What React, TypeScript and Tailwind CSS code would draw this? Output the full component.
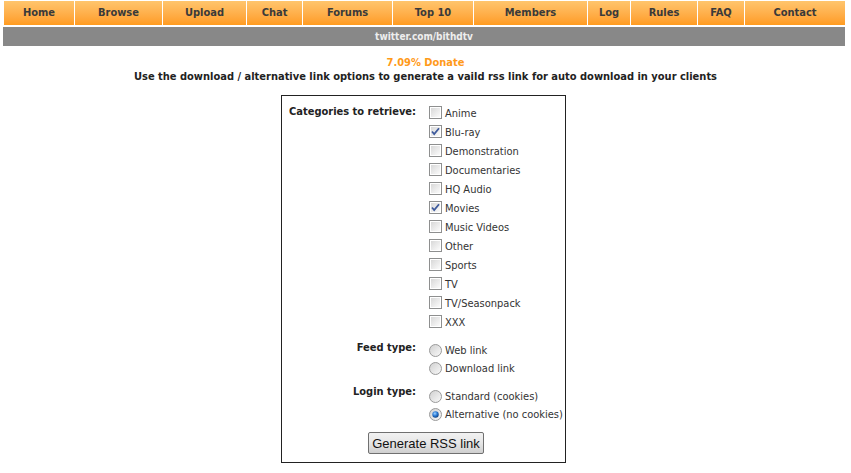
import React from "react";

const nav = [
  { label: "Home", w: "w-[70px]" },
  { label: "Browse", w: "w-[87px]" },
  { label: "Upload", w: "w-[83px]" },
  { label: "Chat", w: "w-[55px]" },
  { label: "Forums", w: "w-[89px]" },
  { label: "Top 10", w: "w-[80px]" },
  { label: "Members", w: "w-[113px]" },
  { label: "Log", w: "w-[42px]" },
  { label: "Rules", w: "w-[66px]" },
  { label: "FAQ", w: "w-[46px]" },
  { label: "Contact", w: "w-[100px]" },
];

const categories = [
  { name: "Anime", on: false },
  { name: "Blu-ray", on: true },
  { name: "Demonstration", on: false },
  { name: "Documentaries", on: false },
  { name: "HQ Audio", on: false },
  { name: "Movies", on: true },
  { name: "Music Videos", on: false },
  { name: "Other", on: false },
  { name: "Sports", on: false },
  { name: "TV", on: false },
  { name: "TV/Seasonpack", on: false },
  { name: "XXX", on: false },
];

const Checkbox = ({ on }: { on: boolean }) => (
  <svg width="13" height="13" viewBox="0 0 13 13" className="shrink-0">
    <defs>
      <linearGradient id="cbg" x1="0" y1="0" x2="1" y2="1">
        <stop offset="0" stopColor="#d8d8d8" />
        <stop offset="1" stopColor="#fbfbfb" />
      </linearGradient>
    </defs>
    <rect x="0.5" y="0.5" width="12" height="12" fill="#fff" stroke="#8e8f8f" />
    <rect x="2" y="2" width="9" height="9" fill="url(#cbg)" />
    {on && (
      <path d="M3 6.5 L5.2 9 L10 3.2" fill="none" stroke="#3e5a9c" strokeWidth="1.8" />
    )}
  </svg>
);

const Radio = ({ on }: { on: boolean }) => (
  <svg width="13" height="13" viewBox="0 0 13 13" className="shrink-0">
    <defs>
      <linearGradient id="rbg" x1="0" y1="0" x2="1" y2="1">
        <stop offset="0" stopColor="#cfcfcf" />
        <stop offset="1" stopColor="#fafafa" />
      </linearGradient>
      <radialGradient id="rdot" cx="0.4" cy="0.35" r="0.7">
        <stop offset="0" stopColor="#9fd3ff" />
        <stop offset="0.5" stopColor="#2b7bd6" />
        <stop offset="1" stopColor="#0b3a78" />
      </radialGradient>
    </defs>
    <circle cx="6.5" cy="6.5" r="6" fill="url(#rbg)" stroke="#9a9a9a" />
    {on && <circle cx="6.5" cy="6.5" r="3.2" fill="url(#rdot)" />}
  </svg>
);

const font = "font-['Tahoma','DejaVu_Sans_Condensed','DejaVu_Sans',sans-serif]";

export default function App() {
  return (
    <div className={`bg-white w-[851px] h-[473px] ${font} text-[#222]`}>
      <div className="flex gap-px ml-[4px] pt-px">
        {nav.map((n) => (
          <div
            key={n.label}
            className={`${n.w} h-[24px] flex items-center justify-center bg-gradient-to-b from-[#ffc56c] to-[#ff9b1e] text-[11px] font-bold text-[#3a3a3a]`}
          >
            {n.label}
          </div>
        ))}
      </div>
      <div className="ml-[3px] mt-[2px] w-[842px] h-[19px] bg-[#888888] flex items-center justify-center text-[10px] font-bold text-[#eeeeee]">
        twitter.com/bithdtv
      </div>
      <div className="mt-[10px] text-center font-bold text-[11px] leading-[14px]">
        <div className="text-[#ff9a1a]">7.09% Donate</div>
        <div>Use the download / alternative link options to generate a vaild rss link for auto download in your clients</div>
      </div>
      <div className="ml-[281px] mt-[11px] w-[285px] h-[368px] border border-[#222] text-[11px]">
        <div className="grid grid-cols-[138px_1fr] pt-[7px]">
          <div className="text-right font-bold pr-[4px] pt-[1px]">Categories to retrieve:</div>
          <div className="pl-[9px] flex flex-col">
            {categories.map((c) => (
              <div key={c.name} className="flex items-center h-[19px] gap-[3px]">
                <Checkbox on={c.on} />
                <span className="text-[#333] pt-[3px]">{c.name}</span>
              </div>
            ))}
          </div>
          <div className="text-right font-bold pr-[4px] pt-[9px]">Feed type:</div>
          <div className="pl-[9px] pt-[10px] flex flex-col">
            {["Web link", "Download link"].map((r) => (
              <div key={r} className="flex items-center h-[18px] gap-[3px]">
                <Radio on={false} />
                <span className="text-[#333] pt-[2px]">{r}</span>
              </div>
            ))}
          </div>
          <div className="text-right font-bold pr-[4px] pt-[7px]">Login type:</div>
          <div className="pl-[9px] pt-[10px] flex flex-col">
            {[
              { r: "Standard (cookies)", on: false },
              { r: "Alternative (no cookies)", on: true },
            ].map(({ r, on }) => (
              <div key={r} className="flex items-center h-[18px] gap-[3px]">
                <Radio on={on} />
                <span className="text-[#333] pt-[2px]">{r}</span>
              </div>
            ))}
          </div>
        </div>
        <div className="flex justify-center mt-[9px] pl-[5px]">
          <button className="w-[116px] h-[22px] border border-[#707070] rounded-[2px] bg-gradient-to-b from-[#f2f2f2] via-[#e6e6e6] to-[#cfcfcf] font-['Liberation_Sans',Arial,sans-serif] text-[13px] text-[#111] leading-none">
            Generate RSS link
          </button>
        </div>
      </div>
    </div>
  );
}
